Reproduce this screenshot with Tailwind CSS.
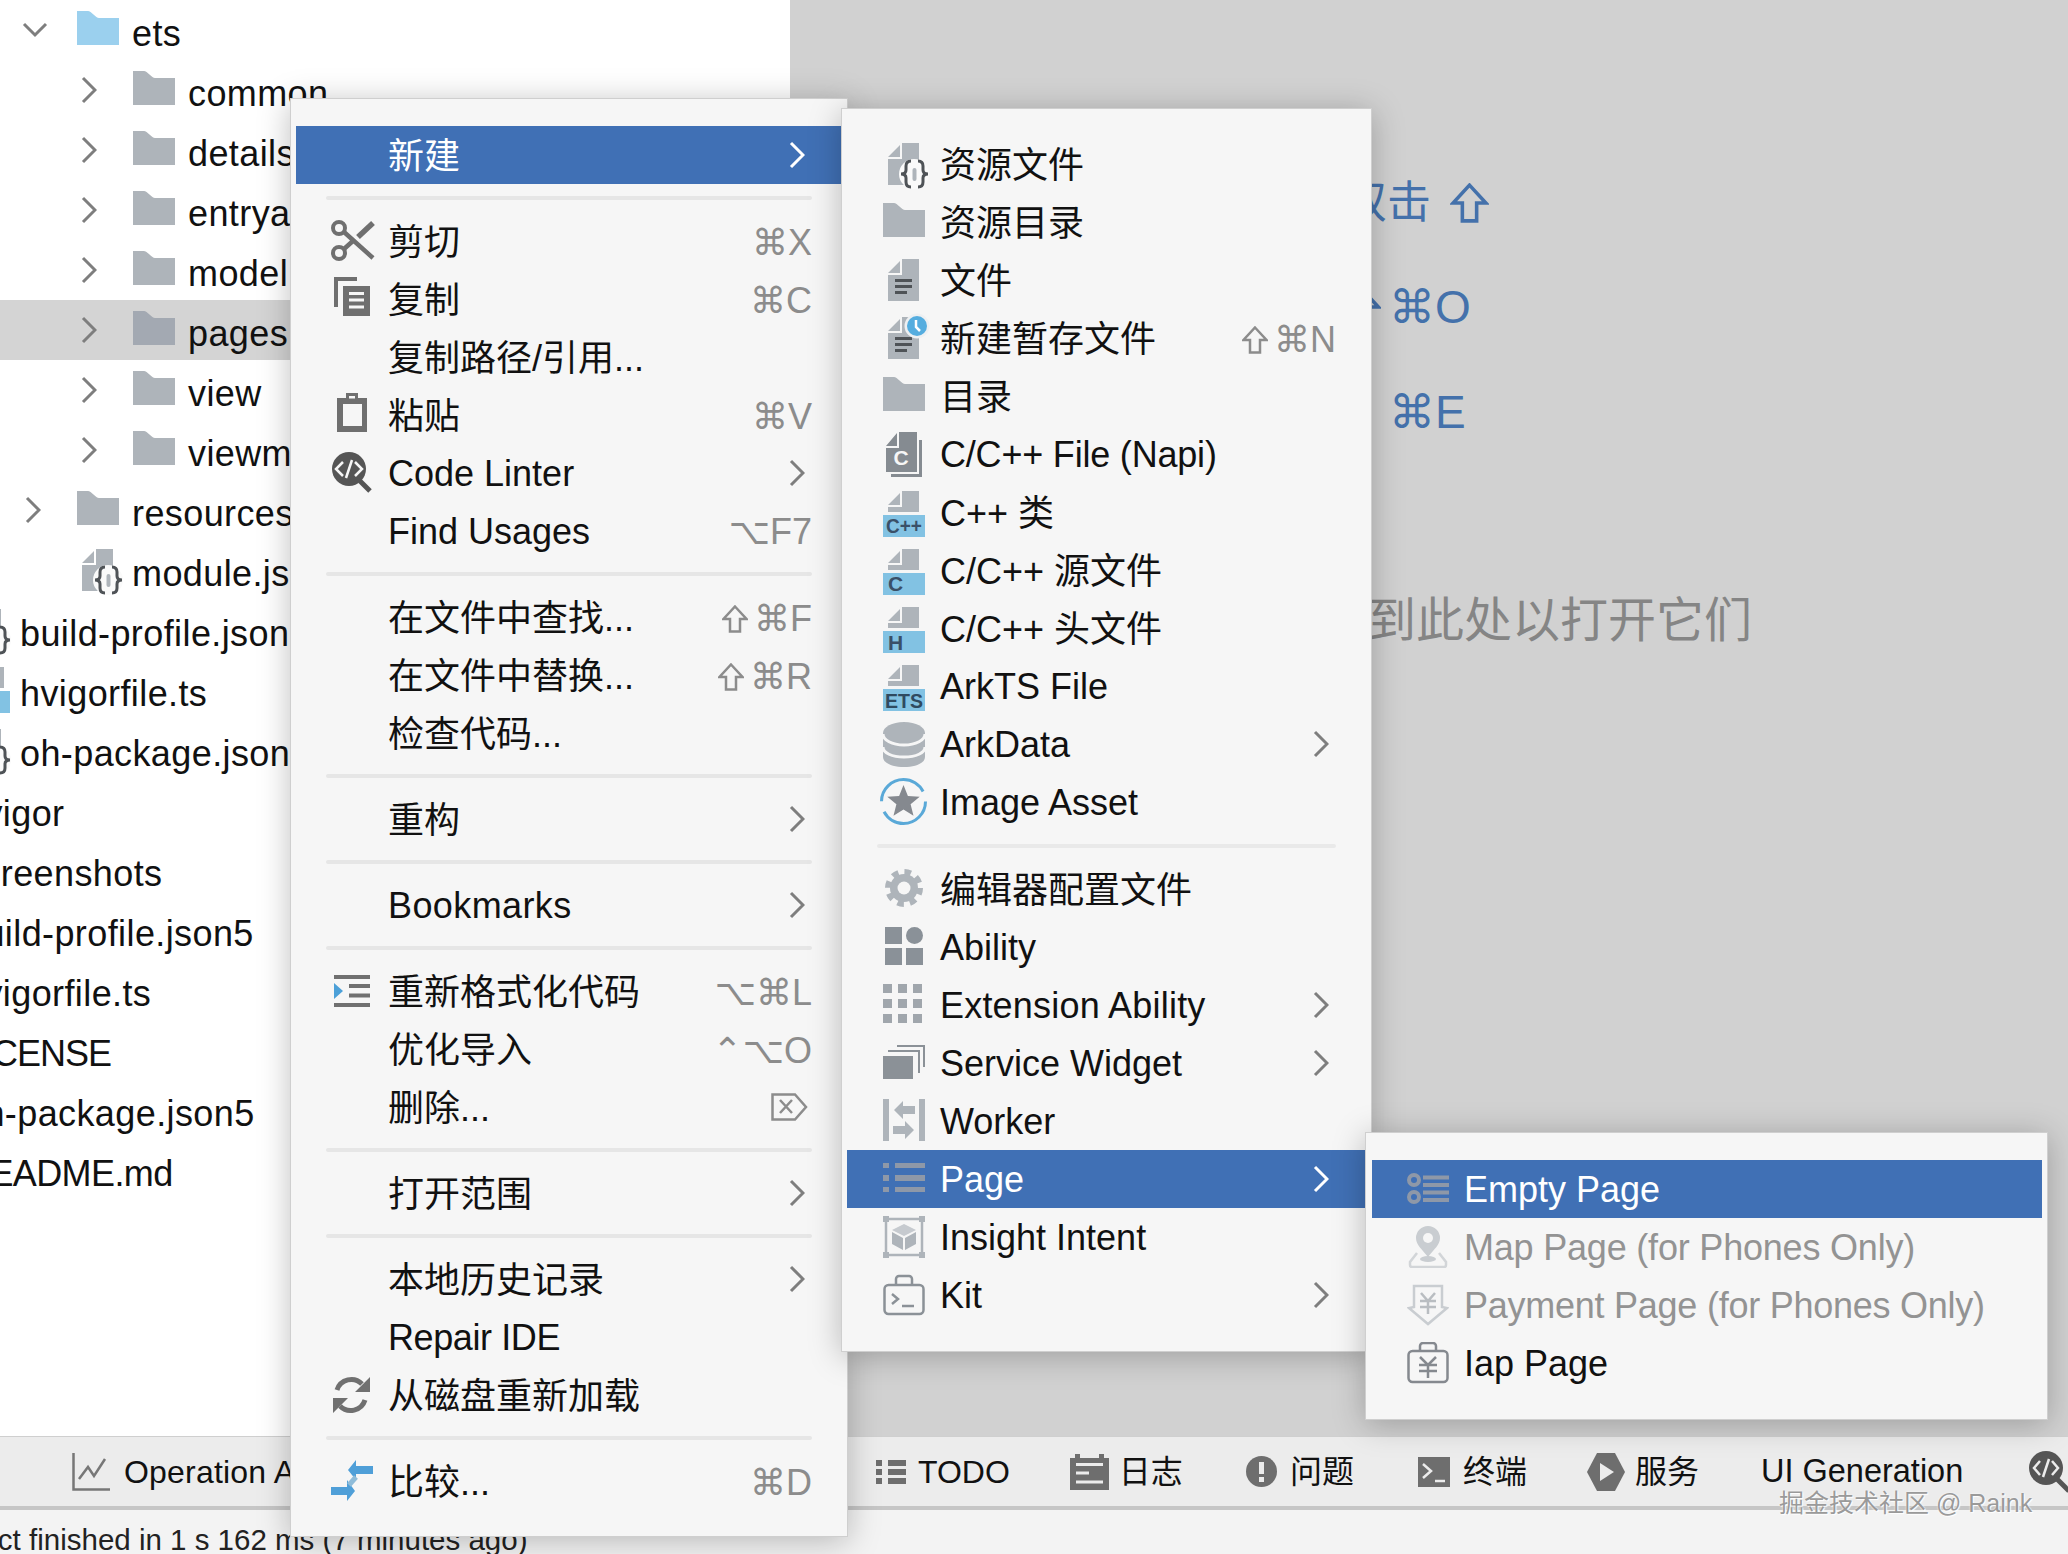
<!DOCTYPE html>
<html lang="zh">
<head>
<meta charset="utf-8">
<script src="https://cdn.jsdelivr.net/npm/@tailwindcss/browser@4"></script>
</head>
<body class="m-0">
<svg width="0" height="0" class="absolute">
<defs>
<g id="chev"><path d="M2 2l12 12L2 26" fill="none" stroke="currentColor" stroke-width="3"/></g>
<g id="shift"><path d="M13 1.500L24.500 14H18V26.500H8V14H1.500Z" fill="none" stroke="currentColor" stroke-width="2.500"/></g>
<g id="folder"><path d="M0 36V2h11c3 0 8 7 11 7h20v27z" fill="currentColor"/></g>
<g id="top"><path d="M5 14L17 2V14Z M19 0H36V21H5V16H19Z" fill="#aeb4ba"/></g>
<g id="doc"><path d="M5 14L17 2V14Z M19 0H36V42H5V16H19Z" fill="#aeb4ba"/><path d="M12 21.500H29M12 27.500H29M12 33.500H24" stroke="#4f5357" stroke-width="3"/></g>
<g id="res"><path d="M5 14L17 2V14Z M19 0H36V42H5V16H19Z" fill="#aeb4ba"/><circle cx="31" cy="31" r="15" fill="#fafafa"/><rect x="29.500" y="25" width="4" height="13" rx="2" fill="#aeb4ba"/><path d="M28 18c-4 0-5 2-5 5v4c0 3-2 4-5 4 3 0 5 1 5 4v4c0 3 1 5 5 5M35 18c4 0 5 2 5 5v4c0 3 2 4 5 4-3 0-5 1-5 4v4c0 3-1 5-5 5" fill="none" stroke="#4f5357" stroke-width="3"/></g>
<g id="cn" ><path d="M3 13L14 0V13Z M16 -1H34V39H3V15H16Z M36 7h3V44H8v-3H36Z" fill="#858b91"/><text x="18" y="32" font-family="Liberation Sans" font-weight="700" font-size="21" text-anchor="middle" fill="#f6f6f6">C</text></g>
<g id="ygrad"><rect x="0" y="24" width="42" height="22" fill="#82c2e3"/></g>
<g id="star"><circle cx="20.500" cy="20.500" r="22" fill="none" stroke="#5aa9d8" stroke-width="3" stroke-dasharray="58 11"/><polygon points="20.500,4 24.900,14.900 36.700,15.700 27.600,23.300 30.500,34.800 20.500,28.500 10.500,34.800 13.400,23.300 4.300,15.700 16.100,14.900" fill="#85898f"/></g>
</defs>
</svg>

<div class="relative w-[2068px] h-[1554px] overflow-hidden bg-[#d1d1d1] flex flex-col text-[36px] text-[#111] [font-family:'Liberation_Sans','Noto_Sans_CJK_SC',sans-serif]">

  <!-- Top region -->
  <div class="flex h-[1436px]">
    <!-- Project tree -->
    <div class="w-[790px] h-full bg-white overflow-hidden whitespace-nowrap tracking-[0.4px]">
      <div class="flex items-center h-[60px] pl-[22px]"><svg class="w-[26px] h-[16px] shrink-0 text-[#7e7e7e]" viewBox="0 0 26 16"><path d="M2 2l11 11L24 2" fill="none" stroke="currentColor" stroke-width="3"/></svg><svg class="ml-[29px] w-[42px] h-[42px] shrink-0 text-[#9bd0ee]"><use href="#folder"/></svg><span class="ml-[13px] pt-[8px]">ets</span></div>
      <div class="flex items-center h-[60px] pl-[81px]"><svg class="w-[16px] h-[28px] shrink-0 text-[#7e7e7e]"><use href="#chev"/></svg><svg class="ml-[36px] w-[42px] h-[42px] shrink-0 text-[#aeb4ba]"><use href="#folder"/></svg><span class="ml-[13px] pt-[8px]">common</span></div>
      <div class="flex items-center h-[60px] pl-[81px]"><svg class="w-[16px] h-[28px] shrink-0 text-[#7e7e7e]"><use href="#chev"/></svg><svg class="ml-[36px] w-[42px] h-[42px] shrink-0 text-[#aeb4ba]"><use href="#folder"/></svg><span class="ml-[13px] pt-[8px]">details</span></div>
      <div class="flex items-center h-[60px] pl-[81px]"><svg class="w-[16px] h-[28px] shrink-0 text-[#7e7e7e]"><use href="#chev"/></svg><svg class="ml-[36px] w-[42px] h-[42px] shrink-0 text-[#aeb4ba]"><use href="#folder"/></svg><span class="ml-[13px] pt-[8px]">entryability</span></div>
      <div class="flex items-center h-[60px] pl-[81px]"><svg class="w-[16px] h-[28px] shrink-0 text-[#7e7e7e]"><use href="#chev"/></svg><svg class="ml-[36px] w-[42px] h-[42px] shrink-0 text-[#aeb4ba]"><use href="#folder"/></svg><span class="ml-[13px] pt-[8px]">model</span></div>
      <div class="flex items-center h-[60px] pl-[81px] bg-[#d4d4d4]"><svg class="w-[16px] h-[28px] shrink-0 text-[#7e7e7e]"><use href="#chev"/></svg><svg class="ml-[36px] w-[42px] h-[42px] shrink-0 text-[#a3a9b2]"><use href="#folder"/></svg><span class="ml-[13px] pt-[8px]">pages</span></div>
      <div class="flex items-center h-[60px] pl-[81px]"><svg class="w-[16px] h-[28px] shrink-0 text-[#7e7e7e]"><use href="#chev"/></svg><svg class="ml-[36px] w-[42px] h-[42px] shrink-0 text-[#aeb4ba]"><use href="#folder"/></svg><span class="ml-[13px] pt-[8px]">view</span></div>
      <div class="flex items-center h-[60px] pl-[81px]"><svg class="w-[16px] h-[28px] shrink-0 text-[#7e7e7e]"><use href="#chev"/></svg><svg class="ml-[36px] w-[42px] h-[42px] shrink-0 text-[#aeb4ba]"><use href="#folder"/></svg><span class="ml-[13px] pt-[8px]">viewmodel</span></div>
      <div class="flex items-center h-[60px] pl-[25px]"><svg class="w-[16px] h-[28px] shrink-0 text-[#7e7e7e]"><use href="#chev"/></svg><svg class="ml-[36px] w-[42px] h-[42px] shrink-0 text-[#aeb4ba]"><use href="#folder"/></svg><span class="ml-[13px] pt-[8px]">resources</span></div>
      <div class="flex items-center h-[60px] pl-[77px]"><svg class="w-[42px] h-[42px] shrink-0 overflow-visible"><use href="#res"/></svg><span class="ml-[13px] pt-[8px]">module.json5</span></div>
      <div class="flex items-center h-[60px]"><svg class="ml-[-35px] w-[42px] h-[42px] shrink-0 overflow-visible"><use href="#res"/></svg><span class="ml-[13px] pt-[8px]">build-profile.json5</span></div>
      <div class="flex items-center h-[60px]"><svg class="ml-[-32px] w-[42px] h-[46px] shrink-0 overflow-visible"><use href="#top"/><use href="#ygrad"/></svg><span class="ml-[10px] pt-[8px]">hvigorfile.ts</span></div>
      <div class="flex items-center h-[60px]"><svg class="ml-[-35px] w-[42px] h-[42px] shrink-0 overflow-visible"><use href="#res"/></svg><span class="ml-[13px] pt-[8px]">oh-package.json5</span></div>
      <div class="flex items-center h-[60px] pl-[0px]"><span class="ml-[-36px] pt-[8px]">hvigor</span></div>
      <div class="flex items-center h-[60px]"><span class="ml-[-36px] pt-[8px]">screenshots</span></div>
      <div class="flex items-center h-[60px]"><span class="ml-[-36px] pt-[8px]">build-profile.json5</span></div>
      <div class="flex items-center h-[60px]"><span class="ml-[-36px] pt-[8px]">hvigorfile.ts</span></div>
      <div class="flex items-center h-[60px]"><span class="ml-[-36px] pt-[8px] tracking-[-1px]">LICENSE</span></div>
      <div class="flex items-center h-[60px]"><span class="ml-[-36px] pt-[8px]">oh-package.json5</span></div>
      <div class="flex items-center h-[60px]"><span class="ml-[-36px] pt-[8px] tracking-[-0.6px]">README.md</span></div>
    </div>
    <!-- Editor placeholder -->
    <div class="flex-1 pt-[173px] text-[44px] text-[#4471ab] whitespace-nowrap [font-family:'Liberation_Sans','Noto_Sans_CJK_SC','DejaVu_Sans',sans-serif]">
      <div class="h-[60px] flex items-center pl-[553px]">双击<svg class="ml-[19px] w-[39px] h-[40px] shrink-0" viewBox="0 0 26 28"><use href="#shift"/></svg></div>
      <div class="mt-[44px] h-[60px] flex items-center pl-[553px] text-[46px] [font-family:'Liberation_Sans','DejaVu_Sans',sans-serif]"><svg class="w-[38px] h-[40px] shrink-0" viewBox="0 0 26 28"><use href="#shift"/></svg><span class="ml-[8px]">⌘O</span></div>
      <div class="mt-[45px] h-[60px] flex items-center pl-[599px] text-[46px] [font-family:'Liberation_Sans','DejaVu_Sans',sans-serif]">⌘E</div>
      <div class="mt-[149px] h-[60px] flex items-center pl-[530px] text-[48px] text-[#858585]">拖到此处以打开它们</div>
    </div>
  </div>

  <!-- Tool window bar -->
  <div class="h-[74px] bg-[#ececec] border-t-[1px] border-t-[#cfcfcf] border-b-[4px] border-b-[#c6c6c6] flex items-center text-[32px] overflow-hidden whitespace-nowrap">
    <div class="w-[876px] shrink-0 flex items-center pl-[72px] overflow-hidden">
      <svg class="w-[38px] h-[38px] shrink-0" viewBox="0 0 38 38" fill="none" stroke="#777" stroke-width="2.500"><path d="M1.500 0V36.500H38"/><path d="M7 26l9-12 6 9 11-17"/></svg>
      <span class="ml-[14px] tracking-[0.2px]">Operation Analyzer</span>
    </div>
    <svg class="w-[30px] h-[24px] shrink-0" viewBox="0 0 30 24" fill="#6e6e6e"><path d="M0 0h6v6H0zM12 0h18v6H12zM0 9h6v6H0zM12 9h18v6H12zM0 18h6v6H0zM12 18h18v6H12z"/></svg>
    <span class="ml-[12px]">TODO</span>
    <svg class="ml-[60px] w-[39px] h-[36px] shrink-0" viewBox="0 0 39 36"><path d="M0 4h5V0h5v4h19V0h5v4h5v32H0z" fill="#6e6e6e"/><path d="M6 10.500h27M6 19h13M6 28h27" stroke="#ececec" stroke-width="3"/></svg>
    <span class="ml-[10px]">日志</span>
    <svg class="ml-[63px] w-[31px] h-[31px] shrink-0" viewBox="0 0 31 31"><circle cx="15.500" cy="15.500" r="15.500" fill="#6e6e6e"/><path d="M13 6h5v12h-5zM13 21h5v5h-5z" fill="#ececec"/></svg>
    <span class="ml-[13px]">问题</span>
    <svg class="ml-[64px] w-[32px] h-[30px] shrink-0" viewBox="0 0 32 30"><path d="M0 0h32v30H0z" fill="#6e6e6e"/><path d="M5 7l8 7-8 7M17 24h10" fill="none" stroke="#ececec" stroke-width="2.500"/></svg>
    <span class="ml-[13px]">终端</span>
    <svg class="ml-[60px] w-[38px] h-[38px] shrink-0" viewBox="0 0 38 38"><path d="M10 0h18l10 19-10 19H10L0 19z" fill="#6e6e6e"/><path d="M13 10l14 9-14 9z" fill="#ececec"/></svg>
    <span class="ml-[10px]">服务</span>
    <span class="ml-[62px] text-[32.500px]">UI Generation</span>
    <svg class="ml-[66px] w-[42px] h-[42px] shrink-0" viewBox="0 0 42 42"><circle cx="17" cy="17" r="17" fill="#555"/><path d="M11 10l-6 7 6 7M23 10l6 7-6 7M20 8l-6 18" fill="none" stroke="#ececec" stroke-width="2.500"/><path d="M28 28l12 12" stroke="#555" stroke-width="5"/></svg>
  </div>

  <!-- Status bar -->
  <div class="flex-1 bg-[#f3f3f3] overflow-hidden whitespace-nowrap text-[29.500px] pt-[9px] leading-[42px] text-[#222]"><span class="inline-block ml-[-71px]">Project finished in 1 s 162 ms (7 minutes ago)</span></div>

  <!-- Context menu -->
  <div class="absolute left-[290px] top-[98px] w-[558px] h-[1439px] bg-[#f6f6f6] border border-[#cfcfcf] py-[27px] pl-[5px] pr-[5px] shadow-[0_4px_30px_rgba(0,0,0,0.25)] whitespace-nowrap">
    <div class="flex items-center h-[58px] pl-[34px] pr-[30px] bg-[#4070b5] text-white"><span class="w-[42px] shrink-0"></span><span class="ml-[16px] pt-[4px]">新建</span><svg class="ml-auto mr-[7px] w-[16px] h-[28px] shrink-0 text-white"><use href="#chev"/></svg></div>
    <div class="h-[28px] mx-[30px] flex items-center"><div class="w-full h-[4px] rounded-full bg-[#e6e6e6]"></div></div>

    <div class="flex items-center h-[58px] pl-[34px] pr-[30px]"><svg class="w-[42px] h-[42px] shrink-0 overflow-visible" fill="none" stroke="#6f6f6f"><circle cx="9" cy="8" r="6" stroke-width="4"/><circle cx="9" cy="33" r="6" stroke-width="4"/><path d="M14 12l29 26M14 29l10-9" stroke-width="4.500"/><path d="M28 17L43 3" stroke-width="5.500"/></svg><span class="ml-[16px] pt-[4px]">剪切</span><span class="ml-auto pt-[3px] text-[#8c8c8c] [font-family:'Liberation_Sans','DejaVu_Sans',sans-serif]">⌘X</span></div>
    <div class="flex items-center h-[58px] pl-[34px] pr-[30px]"><svg class="w-[42px] h-[42px] shrink-0 overflow-visible"><path d="M4 -1H27V3H8V29H4Z" fill="#6f6f6f"/><path d="M13 8H40V38H13Z" fill="#6f6f6f"/><path d="M19 15.500H34M19 22H34M19 29H34" stroke="#f6f6f6" stroke-width="3"/></svg><span class="ml-[16px] pt-[4px]">复制</span><span class="ml-auto pt-[3px] text-[#8c8c8c] [font-family:'Liberation_Sans','DejaVu_Sans',sans-serif]">⌘C</span></div>
    <div class="flex items-center h-[58px] pl-[34px] pr-[30px]"><span class="w-[42px] shrink-0"></span><span class="ml-[16px] pt-[4px]">复制路径/引用...</span></div>
    <div class="flex items-center h-[58px] pl-[34px] pr-[30px]"><svg class="w-[42px] h-[42px] shrink-0 overflow-visible"><path d="M7 4H16V-1H28V4H37V38H7Z" fill="#6f6f6f"/><path d="M13 10H32V32H13ZM19 2H25V4.500H19Z" fill="#f6f6f6"/></svg><span class="ml-[16px] pt-[4px]">粘贴</span><span class="ml-auto pt-[3px] text-[#8c8c8c] [font-family:'Liberation_Sans','DejaVu_Sans',sans-serif]">⌘V</span></div>
    <div class="flex items-center h-[58px] pl-[34px] pr-[30px]"><svg class="w-[42px] h-[42px] shrink-0 overflow-visible"><circle cx="19" cy="17" r="17" fill="#555"/><path d="M13 10l-7 7 7 7M25 10l7 7-7 7M22 8l-6 18" fill="none" stroke="#f6f6f6" stroke-width="2.500"/><path d="M30 29l10 10" stroke="#555" stroke-width="5"/></svg><span class="ml-[16px] pt-[2px]">Code Linter</span><svg class="ml-auto mr-[7px] w-[16px] h-[28px] shrink-0 text-[#7e7e7e]"><use href="#chev"/></svg></div>
    <div class="flex items-center h-[58px] pl-[34px] pr-[30px]"><span class="w-[42px] shrink-0"></span><span class="ml-[16px] pt-[2px]">Find Usages</span><span class="ml-auto pt-[2px] text-[#8c8c8c] [font-family:'Liberation_Sans','DejaVu_Sans',sans-serif]">⌥F7</span></div>
    <div class="h-[28px] mx-[30px] flex items-center"><div class="w-full h-[4px] rounded-full bg-[#e6e6e6]"></div></div>

    <div class="flex items-center h-[58px] pl-[34px] pr-[30px]"><span class="w-[42px] shrink-0"></span><span class="ml-[16px] pt-[4px]">在文件中查找...</span><span class="ml-auto pt-[3px] flex items-center text-[#8c8c8c] [font-family:'Liberation_Sans','DejaVu_Sans',sans-serif]"><svg class="mr-[6px] w-[26px] h-[28px] shrink-0"><use href="#shift"/></svg>⌘F</span></div>
    <div class="flex items-center h-[58px] pl-[34px] pr-[30px]"><span class="w-[42px] shrink-0"></span><span class="ml-[16px] pt-[4px]">在文件中替换...</span><span class="ml-auto pt-[3px] flex items-center text-[#8c8c8c] [font-family:'Liberation_Sans','DejaVu_Sans',sans-serif]"><svg class="mr-[6px] w-[26px] h-[28px] shrink-0"><use href="#shift"/></svg>⌘R</span></div>
    <div class="flex items-center h-[58px] pl-[34px] pr-[30px]"><span class="w-[42px] shrink-0"></span><span class="ml-[16px] pt-[4px]">检查代码...</span></div>
    <div class="h-[28px] mx-[30px] flex items-center"><div class="w-full h-[4px] rounded-full bg-[#e6e6e6]"></div></div>

    <div class="flex items-center h-[58px] pl-[34px] pr-[30px]"><span class="w-[42px] shrink-0"></span><span class="ml-[16px] pt-[4px]">重构</span><svg class="ml-auto mr-[7px] w-[16px] h-[28px] shrink-0 text-[#7e7e7e]"><use href="#chev"/></svg></div>
    <div class="h-[28px] mx-[30px] flex items-center"><div class="w-full h-[4px] rounded-full bg-[#e6e6e6]"></div></div>

    <div class="flex items-center h-[58px] pl-[34px] pr-[30px]"><span class="w-[42px] shrink-0"></span><span class="ml-[16px] pt-[2px] tracking-[0.4px]">Bookmarks</span><svg class="ml-auto mr-[7px] w-[16px] h-[28px] shrink-0 text-[#7e7e7e]"><use href="#chev"/></svg></div>
    <div class="h-[28px] mx-[30px] flex items-center"><div class="w-full h-[4px] rounded-full bg-[#e6e6e6]"></div></div>

    <div class="flex items-center h-[58px] pl-[34px] pr-[30px]"><svg class="w-[42px] h-[42px] shrink-0 overflow-visible"><path d="M4 5H40V9H4ZM4 33H40V37H4ZM19 14H40V18H19ZM19 23.500H40V27.500H19Z" fill="#707070"/><path d="M4 13l9 8-9 8Z" fill="#4ca0d8"/></svg><span class="ml-[16px] pt-[4px]">重新格式化代码</span><span class="ml-auto pt-[3px] text-[#8c8c8c] [font-family:'Liberation_Sans','DejaVu_Sans',sans-serif]">⌥⌘L</span></div>
    <div class="flex items-center h-[58px] pl-[34px] pr-[30px]"><span class="w-[42px] shrink-0"></span><span class="ml-[16px] pt-[4px]">优化导入</span><span class="ml-auto pt-[3px] text-[#8c8c8c] [font-family:'Liberation_Sans','DejaVu_Sans',sans-serif]">⌃⌥O</span></div>
    <div class="flex items-center h-[58px] pl-[34px] pr-[30px]"><span class="w-[42px] shrink-0"></span><span class="ml-[16px] pt-[4px]">删除...</span><svg class="ml-auto mr-[4px] w-[37px] h-[28px] shrink-0" viewBox="0 0 37 28" fill="none" stroke="#8c8c8c" stroke-width="2.500"><path d="M1.500 1.500H24L35 14 24 26.500H1.500Z"/><path d="M9 7l12 13M21 7L9 20"/></svg></div>
    <div class="h-[28px] mx-[30px] flex items-center"><div class="w-full h-[4px] rounded-full bg-[#e6e6e6]"></div></div>

    <div class="flex items-center h-[58px] pl-[34px] pr-[30px]"><span class="w-[42px] shrink-0"></span><span class="ml-[16px] pt-[4px]">打开范围</span><svg class="ml-auto mr-[7px] w-[16px] h-[28px] shrink-0 text-[#7e7e7e]"><use href="#chev"/></svg></div>
    <div class="h-[28px] mx-[30px] flex items-center"><div class="w-full h-[4px] rounded-full bg-[#e6e6e6]"></div></div>

    <div class="flex items-center h-[58px] pl-[34px] pr-[30px]"><span class="w-[42px] shrink-0"></span><span class="ml-[16px] pt-[4px]">本地历史记录</span><svg class="ml-auto mr-[7px] w-[16px] h-[28px] shrink-0 text-[#7e7e7e]"><use href="#chev"/></svg></div>
    <div class="flex items-center h-[58px] pl-[34px] pr-[30px]"><span class="w-[42px] shrink-0"></span><span class="ml-[16px] pt-[2px] tracking-[-0.4px]">Repair IDE</span></div>
    <div class="flex items-center h-[58px] pl-[34px] pr-[30px]"><svg class="w-[42px] h-[42px] shrink-0 overflow-visible" fill="none" stroke="#707070" stroke-width="5"><path d="M7 16A15 15 0 0 1 32 10"/><path d="M35 26A15 15 0 0 1 10 32"/><path d="M40 3V18H25Z M3 39V24H18Z" fill="#707070" stroke="none"/></svg><span class="ml-[16px] pt-[4px]">从磁盘重新加载</span></div>
    <div class="h-[28px] mx-[30px] flex items-center"><div class="w-full h-[4px] rounded-full bg-[#e6e6e6]"></div></div>

    <div class="flex items-center h-[58px] pl-[34px] pr-[30px]"><svg class="w-[42px] h-[42px] shrink-0 overflow-visible" fill="#4f9fd8"><path d="M18 10L26 0V6H43V14H26V20Z"/><path d="M25 31L17 20V27H1V35H17V41Z"/><path d="M19 25L26 17" stroke="#8fbcd9" stroke-width="5"/></svg><span class="ml-[16px] pt-[4px]">比较...</span><span class="ml-auto pt-[3px] text-[#8c8c8c] [font-family:'Liberation_Sans','DejaVu_Sans',sans-serif]">⌘D</span></div>
  </div>

  <!-- Submenu 新建 -->
  <div class="absolute left-[841px] top-[108px] w-[531px] h-[1244px] bg-[#f6f6f6] border border-[#cfcfcf] py-[26px] pl-[5px] pr-[5px] shadow-[0_4px_30px_rgba(0,0,0,0.25)] whitespace-nowrap">
    <div class="flex items-center h-[58px] pl-[36px] pr-[30px]"><svg class="w-[42px] h-[42px] shrink-0 overflow-visible"><use href="#res"/></svg><span class="ml-[15px] pt-[4px]">资源文件</span></div>
    <div class="flex items-center h-[58px] pl-[36px] pr-[30px]"><svg class="w-[42px] h-[42px] shrink-0 text-[#aeb4ba]"><use href="#folder"/></svg><span class="ml-[15px] pt-[4px]">资源目录</span></div>
    <div class="flex items-center h-[58px] pl-[36px] pr-[30px]"><svg class="w-[42px] h-[42px] shrink-0"><use href="#doc"/></svg><span class="ml-[15px] pt-[4px]">文件</span></div>
    <div class="flex items-center h-[58px] pl-[36px] pr-[30px]"><svg class="w-[42px] h-[42px] shrink-0 overflow-visible"><use href="#doc"/><circle cx="34" cy="9" r="12.500" fill="#eef0f2"/><circle cx="34" cy="9" r="10" fill="#55addf"/><path d="M33 3v7l4 4" fill="none" stroke="#fff" stroke-width="2.500"/></svg><span class="ml-[15px] pt-[4px]">新建暂存文件</span><span class="ml-auto pt-[3px] flex items-center text-[#8c8c8c] [font-family:'Liberation_Sans','DejaVu_Sans',sans-serif]"><svg class="mr-[6px] w-[26px] h-[28px] shrink-0"><use href="#shift"/></svg>⌘N</span></div>
    <div class="flex items-center h-[58px] pl-[36px] pr-[30px]"><svg class="w-[42px] h-[42px] shrink-0 text-[#aeb4ba]"><use href="#folder"/></svg><span class="ml-[15px] pt-[4px]">目录</span></div>
    <div class="flex items-center h-[58px] pl-[36px] pr-[30px]"><svg class="w-[42px] h-[42px] shrink-0 overflow-visible"><use href="#cn"/></svg><span class="ml-[15px] pt-[2px] tracking-[-0.2px]">C/C++ File (Napi)</span></div>
    <div class="flex items-center h-[58px] pl-[36px] pr-[30px]"><svg class="w-[42px] h-[42px] shrink-0 overflow-visible"><use href="#top"/><use href="#ygrad"/><text x="21" y="42" font-family="Liberation Sans" font-weight="700" font-size="20" text-anchor="middle" textLength="36" lengthAdjust="spacingAndGlyphs" fill="#3a5068">C++</text></svg><span class="ml-[15px] pt-[4px]">C++ 类</span></div>
    <div class="flex items-center h-[58px] pl-[36px] pr-[30px]"><svg class="w-[42px] h-[42px] shrink-0 overflow-visible"><use href="#top"/><use href="#ygrad"/><text x="5" y="42" font-family="Liberation Sans" font-weight="700" font-size="21" fill="#3a5068">C</text></svg><span class="ml-[15px] pt-[4px]">C/C++ 源文件</span></div>
    <div class="flex items-center h-[58px] pl-[36px] pr-[30px]"><svg class="w-[42px] h-[42px] shrink-0 overflow-visible"><use href="#top"/><use href="#ygrad"/><text x="5" y="43" font-family="Liberation Sans" font-weight="700" font-size="21" fill="#3a5068">H</text></svg><span class="ml-[15px] pt-[4px]">C/C++ 头文件</span></div>
    <div class="flex items-center h-[58px] pl-[36px] pr-[30px]"><svg class="w-[42px] h-[42px] shrink-0 overflow-visible"><use href="#top"/><use href="#ygrad"/><text x="21" y="43" font-family="Liberation Sans" font-weight="700" font-size="21" text-anchor="middle" textLength="38" lengthAdjust="spacingAndGlyphs" fill="#2f4a60">ETS</text></svg><span class="ml-[15px] pt-[2px]">ArkTS File</span></div>
    <div class="flex items-center h-[58px] pl-[36px] pr-[30px]"><svg class="w-[42px] h-[42px] shrink-0 overflow-visible"><path d="M0 10C0 4 9 -1 21 -1s21 5 21 11v24c0 6-9 10-21 10S0 40 0 34Z" fill="#aeb4ba"/><path d="M0 11c0 6 9 11 21 11s21-5 21-11M0 24c0 6 9 10 21 10s21-4 21-10" fill="none" stroke="#f6f6f6" stroke-width="3"/></svg><span class="ml-[15px] pt-[2px]">ArkData</span><svg class="ml-auto mr-[7px] w-[16px] h-[28px] shrink-0 text-[#7e7e7e]"><use href="#chev"/></svg></div>
    <div class="flex items-center h-[58px] pl-[36px] pr-[30px]"><svg class="w-[42px] h-[42px] shrink-0 overflow-visible"><use href="#star"/></svg><span class="ml-[15px] pt-[2px]">Image Asset</span></div>
    <div class="h-[29px] mx-[30px] flex items-center"><div class="w-full h-[4px] rounded-full bg-[#e9e9e9]"></div></div>

    <div class="flex items-center h-[58px] pl-[36px] pr-[30px]"><svg class="w-[42px] h-[42px] shrink-0 overflow-visible"><circle cx="21" cy="20" r="14" fill="#aeb4ba"/><circle cx="21" cy="20" r="16" fill="none" stroke="#aeb4ba" stroke-width="6" stroke-dasharray="6.500 6.060"/><circle cx="21" cy="20" r="6.500" fill="#f6f6f6"/></svg><span class="ml-[15px] pt-[4px]">编辑器配置文件</span></div>
    <div class="flex items-center h-[58px] pl-[36px] pr-[30px]"><svg class="w-[42px] h-[42px] shrink-0" fill="#8a9198"><rect x="2" y="1" width="17" height="17"/><circle cx="31.500" cy="9.500" r="8.500"/><rect x="2" y="22" width="17" height="17"/><rect x="23" y="22" width="17" height="17"/></svg><span class="ml-[15px] pt-[2px]">Ability</span></div>
    <div class="flex items-center h-[58px] pl-[36px] pr-[30px]"><svg class="w-[42px] h-[42px] shrink-0" fill="#a0a6ac"><path d="M0 0h9v9H0zM15 0h9v9h-9zM30 0h9v9h-9zM0 15h9v9H0zM15 15h9v9h-9zM30 15h9v9h-9zM0 30h9v9H0zM15 30h9v9h-9zM30 30h9v9h-9z"/></svg><span class="ml-[15px] pt-[2px] tracking-[0.2px]">Extension Ability</span><svg class="ml-auto mr-[7px] w-[16px] h-[28px] shrink-0 text-[#7e7e7e]"><use href="#chev"/></svg></div>
    <div class="flex items-center h-[58px] pl-[36px] pr-[30px]"><svg class="w-[42px] h-[42px] shrink-0"><rect x="0" y="14" width="30" height="23" fill="#8b9197"/><path d="M5 9H36V31M14 4H41V25" fill="none" stroke="#8b9197" stroke-width="2"/></svg><span class="ml-[15px] pt-[2px]">Service Widget</span><svg class="ml-auto mr-[7px] w-[16px] h-[28px] shrink-0 text-[#7e7e7e]"><use href="#chev"/></svg></div>
    <div class="flex items-center h-[58px] pl-[36px] pr-[30px]"><svg class="w-[42px] h-[42px] shrink-0 overflow-visible" fill="#aeb4ba"><path d="M0 -1h6v42H0zM36 -1h6v42h-6z"/><path d="M11 10L20 1V6H32V14H20V19Z"/><path d="M31 30L22 21V26H10V34H22V39Z"/></svg><span class="ml-[15px] pt-[2px]">Worker</span></div>
    <div class="flex items-center h-[58px] pl-[36px] pr-[30px] bg-[#4070b5] text-white"><svg class="w-[42px] h-[42px] shrink-0" fill="#8e98a8"><path d="M0 5h6v5H0zM12 5h30v5H12zM0 17h6v6H0zM12 17h30v6H12zM0 29h6v5H0zM12 29h30v5H12z"/></svg><span class="ml-[15px] pt-[2px]">Page</span><svg class="ml-auto mr-[7px] w-[16px] h-[28px] shrink-0 text-white"><use href="#chev"/></svg></div>
    <div class="flex items-center h-[58px] pl-[36px] pr-[30px]"><svg class="w-[42px] h-[42px] shrink-0 overflow-visible"><rect x="3" y="3" width="36" height="36" fill="none" stroke="#aeb4ba" stroke-width="2.500"/><path d="M0 0h6v6H0zM36 0h6v6h-6zM0 36h6v6H0zM36 36h6v6h-6z" fill="#aeb4ba"/><path d="M21 8L33 14 21 20 9 14Z" fill="#c6cacf"/><path d="M9 16L20 22V34L9 28ZM33 16L22 22V34L33 28Z" fill="#aeb4ba"/></svg><span class="ml-[15px] pt-[2px]">Insight Intent</span></div>
    <div class="flex items-center h-[58px] pl-[36px] pr-[30px]"><svg class="w-[42px] h-[42px] shrink-0 overflow-visible" fill="none" stroke="#8b9197" stroke-width="2.500"><rect x="1.500" y="11" width="39" height="29" rx="4"/><path d="M13 11V5a3 3 0 0 1 3-3h10a3 3 0 0 1 3 3v6"/><path d="M9 20l6 5-6 5M19 32h12"/></svg><span class="ml-[15px] pt-[2px]">Kit</span><svg class="ml-auto mr-[7px] w-[16px] h-[28px] shrink-0 text-[#7e7e7e]"><use href="#chev"/></svg></div>
  </div>

  <!-- Submenu Page -->
  <div class="absolute left-[1365px] top-[1132px] w-[683px] h-[288px] bg-[#f6f6f6] border border-[#cfcfcf] py-[27px] pl-[6px] pr-[5px] shadow-[0_4px_30px_rgba(0,0,0,0.25)] whitespace-nowrap">
    <div class="flex items-center h-[58px] pl-[35px] bg-[#4070b5] text-white"><svg class="w-[42px] h-[42px] shrink-0" fill="none" stroke="#8e98a8"><circle cx="7" cy="12" r="5" stroke-width="4"/><circle cx="7" cy="29" r="5" stroke-width="4"/><path d="M16 9.500H42M16 17H42M16 24.500H42M16 32H42" stroke-width="4"/></svg><span class="ml-[15px] pt-[2px]">Empty Page</span></div>
    <div class="flex items-center h-[58px] pl-[35px] text-[#939393]"><svg class="w-[42px] h-[42px] shrink-0"><path d="M10 27L3 36v3a2 2 0 0 0 2 2h32a2 2 0 0 0 2-2v-3L32 27" fill="none" stroke="#d2d5d8" stroke-width="2.500"/><path d="M21 31C15 23 9 19 9 12a12 12 0 0 1 24 0c0 7-6 11-12 19Z" fill="#c9cdd1"/><circle cx="21" cy="12" r="5" fill="#f6f6f6"/><ellipse cx="21" cy="33" rx="8" ry="3" fill="#c9cdd1"/></svg><span class="ml-[15px] pt-[2px] tracking-[-0.2px]">Map Page (for Phones Only)</span></div>
    <div class="flex items-center h-[58px] pl-[35px] text-[#939393]"><svg class="w-[42px] h-[42px] shrink-0" fill="none" stroke="#c9cdd1" stroke-width="2.500"><path d="M7 2H35V23L40 24 21 40 2 24 7 23Z"/><path d="M14 9l7 8 7-8M13 17h16M13 23h16M21 17v13" stroke="#b9bdc1"/></svg><span class="ml-[15px] pt-[2px] tracking-[-0.25px]">Payment Page (for Phones Only)</span></div>
    <div class="flex items-center h-[58px] pl-[35px]"><svg class="w-[42px] h-[42px] shrink-0" fill="none" stroke="#85898f" stroke-width="2.500"><rect x="1.500" y="9" width="39" height="31" rx="4"/><path d="M13 9V4a3 3 0 0 1 3-3h10a3 3 0 0 1 3 3v5"/><path d="M13 15l8 8 8-8M12 23h18M12 29h18M21 23v13"/></svg><span class="ml-[15px] pt-[2px]">Iap Page</span></div>
  </div>

  <!-- Watermark -->
  <div class="absolute left-[1779px] top-[1486px] text-[25px] leading-[34px] whitespace-nowrap text-[#9a9a9a] [text-shadow:0_0_2px_#fff,1px_1px_1px_#fff]">掘金技术社区 @ Raink</div>
</div>
</body>
</html>
